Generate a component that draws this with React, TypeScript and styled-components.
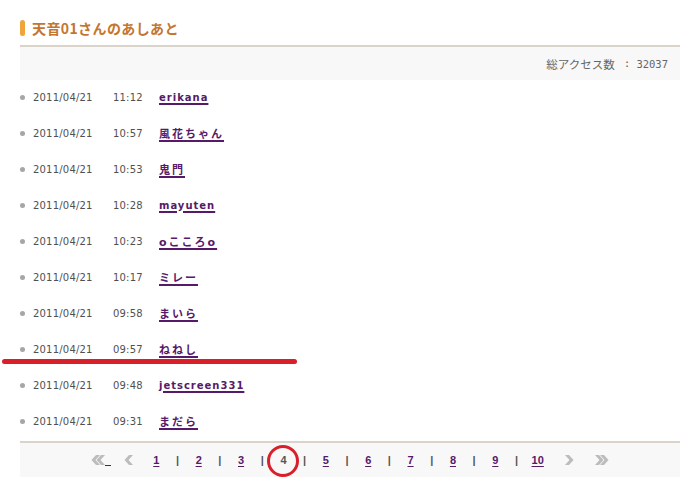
import React from "react";
import styled, { createGlobalStyle } from "styled-components";

const GlobalStyle = createGlobalStyle`
  html, body { margin: 0; padding: 0; background: #ffffff; }
  body { font-family: "DejaVu Sans", "Noto Sans CJK JP", sans-serif; }
`;

const Page = styled.div`
  position: relative;
  width: 696px;
  height: 484px;
  padding: 20px 16px 0 20px;
  box-sizing: border-box;
`;

const Title = styled.div`
  display: flex;
  align-items: center;
  gap: 7px;
  height: 16px;
`;

const TitleBar = styled.span`
  width: 5px;
  height: 16px;
  border-radius: 3px;
  background: #eea53c;
`;

const TitleText = styled.h2`
  margin: 0;
  font: 700 14px/16px "Noto Sans CJK JP", sans-serif;
  letter-spacing: 0.4px;
  color: #c47630;
`;

const Rule = styled.div<{ $top: number }>`
  margin-top: ${(p) => p.$top}px;
  height: 2px;
  background: #d9d3c9;
`;

const AccessBar = styled.div`
  height: 33px;
  background: #f8f8f8;
  display: flex;
  align-items: center;
  justify-content: flex-end;
  padding-right: 12px;
  font: 400 11.5px "Noto Sans CJK JP", sans-serif;
  color: #666666;
`;

const Colon = styled.span`
  margin: 0 6px 0 9px;
  font: 400 11px "DejaVu Sans Mono", monospace;
`;

const Count = styled.span`
  font: 400 10.5px "DejaVu Sans Mono", monospace;
`;

const List = styled.ul`
  margin: 0;
  padding: 0;
  list-style: none;
`;

const Row = styled.li`
  height: 36px;
  padding-bottom: 2px;
  box-sizing: border-box;
  display: flex;
  align-items: center;
`;

const Bullet = styled.span`
  width: 5px;
  height: 5px;
  border-radius: 50%;
  background: #a6a6a6;
  margin-right: 8px;
`;

const Stamp = styled.span<{ $w: number }>`
  width: ${(p) => p.$w}px;
  font: 400 10px "DejaVu Sans", sans-serif;
  letter-spacing: 0.2px;
  color: #505050;
`;

const Name = styled.a<{ $cjk?: boolean }>`
  font-family: "DejaVu Sans", "Noto Sans CJK JP", sans-serif;
  font-weight: 700;
  font-size: ${(p) => (p.$cjk ? 11 : 10)}px;
  letter-spacing: ${(p) => (p.$cjk ? 2 : 1)}px;
  color: #561a69;
  text-decoration: underline;
  text-decoration-thickness: 1.5px;
  text-underline-offset: 2px;
  cursor: pointer;
`;

const Pager = styled.div`
  height: 34px;
  background: #f8f8f8;
  display: flex;
  align-items: center;
  justify-content: center;
  font: 700 11px "Liberation Sans", sans-serif;
`;

const Cell = styled.span<{ $w?: number; $ml?: number }>`
  display: inline-flex;
  align-items: center;
  justify-content: center;
  width: ${(p) => (p.$w ? `${p.$w}px` : "auto")};
  margin-left: ${(p) => p.$ml ?? 0}px;
`;

const PageLink = styled.a`
  color: #561a69;
  text-decoration: underline;
  text-underline-offset: 2px;
  cursor: pointer;
`;

const Current = styled.span`
  color: #555555;
`;

const Sep = styled.span`
  color: #555555;
`;

const Trail = styled.span`
  display: inline-block;
  width: 6px;
  height: 12px;
  box-sizing: border-box;
  border-bottom: 1px solid #561a69;
`;

const RedLine = styled.div`
  position: absolute;
  left: 2px;
  top: 359px;
  width: 295px;
  height: 5px;
  border-radius: 3px;
  background: #d9202a;
`;

const RedCircle = styled.div`
  position: absolute;
  left: 267px;
  top: 445px;
  width: 32px;
  height: 32px;
  box-sizing: border-box;
  border: 3.5px solid #d9202a;
  border-radius: 50%;
`;

const Chevron = ({ double, dir }: { double?: boolean; dir: "l" | "r" }) => {
  const w = double ? 14 : 9;
  const shape = (o: number) =>
    dir === "l"
      ? `${o + 5},0 ${o + 9},0 ${o + 4.5},5 ${o + 9},10 ${o + 5},10 ${o + 0.5},5`
      : `${o + 0},0 ${o + 4},0 ${o + 8.5},5 ${o + 4},10 ${o + 0},10 ${o + 4.5},5`;
  return (
    <svg width={w} height={10} viewBox={`0 0 ${w} 10`}>
      <polygon points={shape(0)} fill="#bcbcbc" />
      {double && <polygon points={shape(5)} fill="#bcbcbc" />}
    </svg>
  );
};

const rows: { time: string; name: string; cjk?: boolean }[] = [
  { time: "11:12", name: "erikana" },
  { time: "10:57", name: "風花ちゃん", cjk: true },
  { time: "10:53", name: "鬼門", cjk: true },
  { time: "10:28", name: "mayuten" },
  { time: "10:23", name: "oこころo", cjk: true },
  { time: "10:17", name: "ミレー", cjk: true },
  { time: "09:58", name: "まいら", cjk: true },
  { time: "09:57", name: "ねねし", cjk: true },
  { time: "09:48", name: "jetscreen331" },
  { time: "09:31", name: "まだら", cjk: true },
];

export default function App() {
  const pages = Array.from({ length: 10 }, (_, i) => i + 1);
  return (
    <>
      <GlobalStyle />
      <Page>
        <Title>
          <TitleBar />
          <TitleText>天音01さんのあしあと</TitleText>
        </Title>
        <Rule $top={9} />
        <AccessBar>
          総アクセス数
          <Colon>:</Colon>
          <Count>32037</Count>
        </AccessBar>
        <List>
          {rows.map((r, i) => (
            <Row key={i}>
              <Bullet />
              <Stamp $w={80}>2011/04/21</Stamp>
              <Stamp $w={46}>{r.time}</Stamp>
              <Name $cjk={r.cjk}>{r.name}</Name>
            </Row>
          ))}
        </List>
        <Rule $top={1} />
        <Pager>
          <Cell>
            <Chevron double dir="l" />
            <Trail />
          </Cell>
          <Cell $ml={13}>
            <Chevron dir="l" />
          </Cell>
          <Cell $ml={13}></Cell>
          {pages.map((n) => (
            <React.Fragment key={n}>
              <Cell $w={21.2}>
                {n === 4 ? <Current>{n}</Current> : <PageLink>{n}</PageLink>}
              </Cell>
              {n < 10 && (
                <Cell $w={21.2}>
                  <Sep>|</Sep>
                </Cell>
              )}
            </React.Fragment>
          ))}
          <Cell $ml={17}>
            <Chevron dir="r" />
          </Cell>
          <Cell $ml={21}>
            <Chevron double dir="r" />
          </Cell>
        </Pager>
        <RedLine />
        <RedCircle />
      </Page>
    </>
  );
}
